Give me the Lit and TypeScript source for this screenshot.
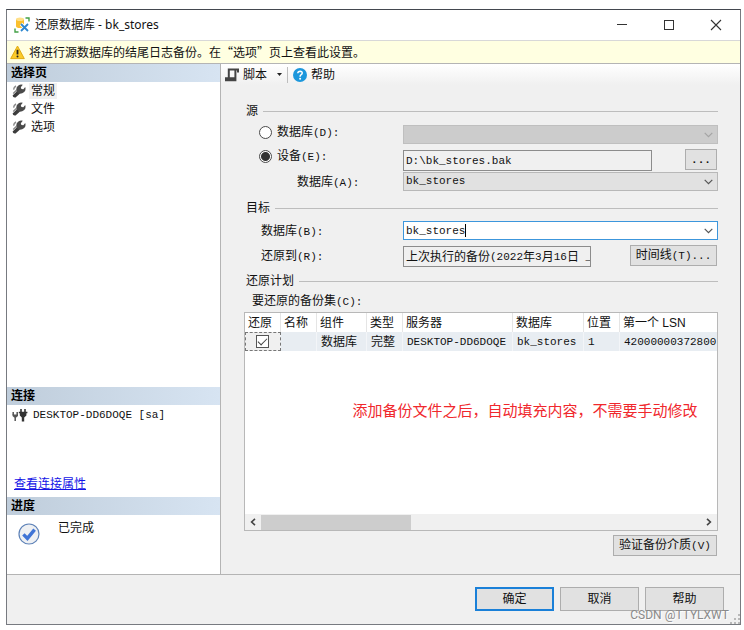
import { LitElement, html, css, svg } from "lit";
import { customElement, state } from "lit/decorators.js";

const wrench = html`<svg class="ico" width="14" height="14" viewBox="0 0 14 14" aria-hidden="true">
  <path d="M0.6 11.6 L5.2 7 L8 9.4 L3.6 13.4 Q1 14 0.6 11.6 Z" fill="#3c3c3c"/>
  <path d="M4.4 7.4 Q3.6 3.2 6.4 1.4 Q8.6 0 10.8 0.8 L8.8 3.2 L9.4 5 L11.4 5.2 L13.2 3 Q14.2 6 12.2 8 Q10 10 7 9.6 Z" fill="#4a4a4a"/>
  <path d="M1.6 5.6 Q1.8 3 4 2 M1.2 9.4 L4.2 6.6" fill="none" stroke="#8a8a8a" stroke-width="1.4"/>
</svg>`;

const chevron = (cls: string) => html`<svg class="chev ${cls}" width="9" height="6" viewBox="0 0 9 6" aria-hidden="true">
  <path d="M0.7 0.9 L4.5 4.7 L8.3 0.9" fill="none" stroke="currentColor" stroke-width="1.2"/>
</svg>`;

const grip = [[8, 0], [4, 4], [8, 4], [0, 8], [4, 8], [8, 8]];

@customElement("app-root")
export class AppRoot extends LitElement {
  @state() private source = "device";

  static styles = css`
    :host {
      display: flex;
      box-sizing: border-box;
      min-height: 100vh;
      padding: 9px 3px 5px 6px;
      background: #fff;
      color: #111;
      font: 12px/18px "Noto Sans", "Noto Sans CJK SC", sans-serif;
    }
    * { box-sizing: border-box; }
    svg { display: block; flex: none; }
    input, select, button { font: inherit; color: inherit; margin: 0; border-radius: 0; }
    .mono { font-family: "Liberation Mono", "Noto Sans CJK SC", monospace; font-size: 11px; }
    .window {
      position: relative;
      flex: 1;
      min-width: 0;
      display: flex;
      flex-direction: column;
      background: #f0f0f0;
      border: 1px solid #777a80;
      border-top-color: #43474f;
    }
    .titlebar {
      display: flex;
      align-items: center;
      height: 31px;
      padding: 0 18px 0 7px;
      gap: 5px;
      background: #fff;
      border-bottom: 1px solid #d8d8d8;
    }
    .titlebar h1 { flex: 1; margin: 0; font-size: 12px; font-weight: 400; }
    .caption { display: flex; gap: 35px; }
    .caption button { padding: 0; border: 0; background: none; width: 12px; height: 12px; color: #333; }
    .notice {
      display: flex;
      align-items: center;
      gap: 4px;
      height: 23px;
      padding-left: 3px;
      background: #ffffe1;
      border-bottom: 1px solid #b4b4b4;
      font-family: "Noto Sans CJK SC", sans-serif;
    }
    .body { flex: 1; display: flex; border-bottom: 1px solid #b4b4b4; }
    .side {
      flex: none;
      width: 214px;
      display: flex;
      flex-direction: column;
      background: #fff;
      border-right: 1px solid #b4b4b4;
    }
    .side h2 {
      margin: 0;
      padding-left: 4px;
      height: 18px;
      line-height: 17px;
      font-size: 12px;
      font-weight: 700;
      color: #000;
      background: linear-gradient(90deg, #bfcddb, #d7e4f2);
    }
    .pages { flex: 1; margin: 0; padding: 0; list-style: none; }
    .pages button {
      display: flex;
      align-items: center;
      gap: 3px;
      height: 18px;
      padding: 0 0 0 5px;
      border: 0;
      background: none;
    }
    .pages span { padding: 0 2px; line-height: 16px; }
    .pages .on span { background: #f0f0f0; }
    .conn { height: 92px; display: flex; flex-direction: column; justify-content: space-between; padding: 1px 7px 4px; }
    .server { display: flex; align-items: center; gap: 5px; padding-right: 6px; }
    .server svg { margin-left: -2px; }
    .conn a { color: #1414e6; line-height: 18px; }
    .progress { height: 59px; display: flex; gap: 18px; padding: 4px 11px; }
    .progress svg { margin-top: 4px; }
    .main { flex: 1; min-width: 0; }
    .toolbar {
      display: flex;
      align-items: center;
      height: 21px;
      padding-left: 4px;
      background: linear-gradient(#fff, #f0f0f0);
    }
    .toolbar button { display: flex; align-items: center; gap: 4px; padding: 0; border: 0; background: none; }
    .toolbar .drop { margin: 0 5px 0 10px; }
    .toolbar .sep { width: 1px; height: 16px; margin-right: 5px; background: #bdbdbd; }
    .form { padding: 17px 22px 18px 23px; }
    fieldset { border: 0; margin: 0; padding: 0; min-width: 0; }
    .group { display: flex; align-items: center; gap: 5px; height: 18px; padding-left: 2px; }
    .group::after { content: ""; flex: 1; height: 1px; background: #bdbdbd; }
    .rows { display: grid; grid-template-columns: 159px minmax(0, 1fr); row-gap: 5px; padding: 4px 0 5px; }
    .rows.source { padding: 5px 0 8px; }
    .pair { display: grid; grid-template-columns: subgrid; grid-column: 1 / -1; row-gap: 1px; }
    .field { display: flex; align-items: end; line-height: 16px; padding-left: 17px; }
    .field.deep { padding-left: 53px; }
    .field.mid { align-items: center; }
    .pick { display: flex; align-items: center; gap: 5px; height: 14px; padding-left: 15px; }
    .pick input {
      appearance: none;
      width: 13px;
      height: 13px;
      border: 1px solid #4a4a4a;
      border-radius: 50%;
      background: #fff;
    }
    .pick input:checked { background: radial-gradient(circle, #333 0 4px, #fff 5px); }
    .combo {
      position: relative;
      display: flex;
      align-items: center;
      height: 19px;
      border: 1px solid #b8b8b8;
      background: #e1e1e1;
    }
    .combo select {
      appearance: none;
      width: 100%;
      height: 100%;
      padding: 0 20px 0 2px;
      border: 0;
      background: none;
      outline: 0;
      line-height: 15px;
    }
    .combo.off { background: #ccc; border-color: #bfbfbf; }
    .combo.edit { background: #fff; border-color: #3c96dc; padding-left: 2px; }
    .combo input { width: 9ch; padding: 0; border: 0; outline: 0; background: none; height: 15px; }
    .caret { width: 1px; height: 13px; background: #000; }
    .chev { position: absolute; right: 4px; top: 6px; color: #555; pointer-events: none; }
    .chev.dim { color: #a5a5a5; }
    .line { display: flex; justify-content: space-between; height: 22px; }
    .box {
      align-self: end;
      display: flex;
      align-items: center;
      width: 249px;
      height: 21px;
      padding: 0 2px;
      border: 1px solid #8c8c8c;
      background: #f0f0f0;
      outline: 0;
    }
    .box.short { width: 188px; overflow: hidden; white-space: pre; line-height: 18px; }
    .btn {
      height: 21px;
      padding: 0;
      border: 1px solid #adadad;
      background: #e1e1e1;
      line-height: 18px;
      white-space: nowrap;
      margin-right: 1px;
    }
    .btn.dots { width: 32px; font-weight: 700; }
    .btn.time { width: 87px; }
    .btn.verify { display: block; width: 104px; margin: 4px 1px 0 auto; }
    .caption-text { padding: 2px 0 1px 8px; }
    .grid {
      display: flex;
      flex-direction: column;
      height: 219px;
      border: 1px solid #b8b8b8;
      background: #fff;
    }
    .scroller { flex: 1; overflow: hidden; }
    table { width: 100%; table-layout: fixed; border-collapse: separate; border-spacing: 0; }
    th, td { height: 19px; padding: 0 0 0 4px; text-align: left; font-weight: 400; white-space: nowrap; line-height: 18px; }
    th { padding-left: 3px; border-right: 1px solid #e5e5e5; font-family: "Liberation Sans", "Noto Sans CJK SC", sans-serif; }
    th:last-child { border-right: 0; }
    td { background: #e8edf2; border-right: 1px solid #f3f5f8; }
    td:last-child { border-right: 0; }
    td.tick { padding: 0; background: #f0f0f0; outline: 1px dashed #777; outline-offset: -1px; }
    .w36 { width: 36px; } .w50 { width: 50px; } .w110 { width: 110px; } .w71 { width: 71px; }
    .tick input {
      appearance: none;
      display: grid;
      place-items: center;
      width: 13px;
      height: 13px;
      margin: 0 auto;
      border: 1px solid #555;
      background: #fff;
    }
    .tick input:checked::before {
      content: "";
      width: 8px;
      height: 4px;
      border: solid #444;
      border-width: 0 0 1px 1px;
      transform: rotate(-45deg);
      margin-bottom: 3px;
    }
    .remark { margin: 0; text-align: center; color: #f0282d; font-size: 15px; line-height: 22px; padding: 48px 0 0 88px; white-space: nowrap; }
    .scrollbar { display: flex; align-items: center; justify-content: space-between; height: 16px; background: #f0f0f0; }
    .scrollbar button { display: grid; place-items: center; width: 16px; height: 16px; padding: 0; border: 0; background: none; color: #444; }
    .track { flex: 1; height: 15px; }
    .thumb { width: 34%; height: 100%; background: #cdcdcd; }
    .actions { display: flex; justify-content: flex-end; gap: 6px; height: 49px; padding: 12px 16px 0 0; }
    .actions button { width: 79px; height: 24px; padding: 0; border: 1px solid #adadad; background: #e1e1e1; line-height: 20px; }
    .actions .primary { border: 2px solid #1a80d8; line-height: 18px; }
    .sign {
      position: absolute;
      right: 11px;
      bottom: 0;
      font-family: Roboto, sans-serif;
      color: #8a8a8a;
      text-shadow: 1px 1px 0 #fff;
      pointer-events: none;
    }
    .grip { position: absolute; right: 0; bottom: 0; }
  `;

  render() {
    return html`<div class="window">
      <header class="titlebar">
        <svg width="16" height="16" viewBox="0 0 16 16" aria-hidden="true">
          <path d="M2 2 V9 Q2 11 6 11 Q10 11 10 9 V2 Z" fill="#fbc02d"/>
          <ellipse cx="6" cy="2.2" rx="4" ry="1.8" fill="#ffe08a"/>
          <path d="M11.5 1 H15 V4.5" fill="none" stroke="#43a047" stroke-width="1.4"/>
          <path d="M1 11.5 V15 H4.5" fill="none" stroke="#43a047" stroke-width="1.4"/>
          <path d="M7 7 L14 14 M14 7 L7 14" stroke="#fff" stroke-width="3.4"/>
          <path d="M7 7 L14 14 M14 7 L7 14" stroke="#2d87cf" stroke-width="1.8"/>
        </svg>
        <h1>还原数据库 - bk_stores</h1>
        <div class="caption">
          <button aria-label="最小化"><svg width="12" height="12" viewBox="0 0 12 12"><path d="M1 5.5 H11" stroke="#333"/></svg></button>
          <button aria-label="最大化"><svg width="12" height="12" viewBox="0 0 12 12"><rect x="1.5" y="1.5" width="9" height="9" fill="none" stroke="#333"/></svg></button>
          <button aria-label="关闭"><svg width="12" height="12" viewBox="0 0 12 12"><path d="M1 1 L11 11 M11 1 L1 11" stroke="#333" stroke-width="1.1"/></svg></button>
        </div>
      </header>
      <div class="notice" role="status">
        <svg width="15" height="15" viewBox="0 0 15 15" aria-hidden="true">
          <path d="M7.5 1 L14.3 13.6 H0.7 Z" fill="#fbcb2a" stroke="#e0ab14" stroke-linejoin="round"/>
          <path d="M7.5 4.8 V9.4" stroke="#222" stroke-width="1.8"/><circle cx="7.5" cy="11.4" r="1" fill="#222"/>
        </svg>
        <span>将进行源数据库的结尾日志备份。在“选项”页上查看此设置。</span>
      </div>
      <div class="body">
        <aside class="side">
          <h2>选择页</h2>
          <ul class="pages">
            ${["常规", "文件", "选项"].map((p, i) => html`<li><button class=${i === 0 ? "on" : ""}>${wrench}<span>${p}</span></button></li>`)}
          </ul>
          <h2>连接</h2>
          <div class="conn">
            <div class="server">
              <svg width="16" height="14" viewBox="0 0 16 14" aria-hidden="true">
                <path d="M1.2 4 V7 M5.2 4 V7 M3.2 8 V13" stroke="#555" stroke-width="1.5"/>
                <path d="M0.5 6.4 H6 V8 L4.2 9.6 H2.2 L0.5 8 Z" fill="#555"/>
                <path d="M9 1 V5 M13 1 V5" stroke="#333" stroke-width="1.6"/>
                <path d="M6.8 3.8 H15.4 V5.2 H14.4 V7.5 L12.2 9.6 V13.4 H9.8 V9.6 L7.8 7.5 V5.2 H6.8 Z" fill="#333"/>
              </svg>
              <span class="mono">DESKTOP-DD6DOQE [sa]</span>
            </div>
            <a href="#properties">查看连接属性</a>
          </div>
          <h2>进度</h2>
          <div class="progress">
            <svg width="22" height="22" viewBox="0 0 22 22" aria-hidden="true">
              <circle cx="11" cy="11" r="10" fill="#eef0f3" stroke="#5f83b8" stroke-width="1.2"/>
              <path d="M5.4 11.4 L9.4 15.4 L16.6 6.6" fill="none" stroke="#3f74d6" stroke-width="3.4"/>
            </svg>
            <span>已完成</span>
          </div>
        </aside>
        <main class="main">
          <div class="toolbar">
            <button>
              <svg width="14" height="14" viewBox="0 0 14 14" aria-hidden="true">
                <path d="M3.8 9.6 V1.6 H13 V4.4 M10.4 1.6 V12.2 H1 V10.2 H8.4 V12" fill="none" stroke="#444" stroke-width="2"/>
              </svg>脚本
            </button>
            <button class="drop" aria-label="更多"><svg width="5" height="3" viewBox="0 0 5 3"><path d="M0 0 H5 L2.5 3 Z" fill="#222"/></svg></button>
            <span class="sep"></span>
            <button>
              <svg width="14" height="14" viewBox="0 0 14 14" aria-hidden="true">
                <circle cx="7" cy="7" r="7" fill="#1c97dc"/>
                <path d="M4.8 5.2 Q5 3.2 7.1 3.2 Q9.3 3.3 9.2 5.1 Q9.1 6.2 7.9 6.9 Q7.1 7.4 7.1 8.7" fill="none" stroke="#fff" stroke-width="1.5"/>
                <circle cx="7.1" cy="10.7" r="1" fill="#fff"/>
              </svg>帮助
            </button>
          </div>
          <div class="form">
            <fieldset>
              <div class="group">源</div>
              <div class="rows source">
                <label class="pick"><input type="radio" name="src" .checked=${this.source === "db"} @change=${() => (this.source = "db")}><span>数据库<span class="mono">(D):</span></span></label>
                <div class="combo off"><select class="mono" aria-label="源数据库" disabled></select>${chevron("dim")}</div>
                <div class="pair">
                  <label class="pick"><input type="radio" name="src" .checked=${this.source === "device"} @change=${() => (this.source = "device")}><span>设备<span class="mono">(E):</span></span></label>
                  <div class="line">
                    <input class="box mono" aria-label="设备" readonly value="D:\\bk_stores.bak">
                    <button class="btn dots mono" aria-label="浏览">...</button>
                  </div>
                  <label class="field deep" for="dba"><span>数据库<span class="mono">(A):</span></span></label>
                  <div class="combo"><select class="mono" id="dba"><option>bk_stores</option></select>${chevron("")}</div>
                </div>
              </div>
            </fieldset>
            <fieldset>
              <div class="group">目标</div>
              <div class="rows">
                <label class="field" for="dbb"><span>数据库<span class="mono">(B):</span></span></label>
                <div class="combo edit"><input class="mono" id="dbb" value="bk_stores"><span class="caret"></span>${chevron("")}</div>
                <label class="field mid" for="until"><span>还原到<span class="mono">(R):</span></span></label>
                <div class="line">
                  <output class="box short" id="until">上次执行的备份<span class="mono">(2022</span>年<span class="mono">3</span>月<span class="mono">16</span>日<span class="mono"> _</span></output>
                  <button class="btn time">时间线<span class="mono">(T)...</span></button>
                </div>
              </div>
            </fieldset>
            <fieldset>
              <div class="group">还原计划</div>
              <div class="caption-text">要还原的备份集<span class="mono">(C):</span></div>
              <div class="grid">
                <div class="scroller">
                  <table>
                    <thead><tr>
                      <th class="w36">还原</th><th class="w36">名称</th><th class="w50">组件</th><th class="w36">类型</th>
                      <th class="w110">服务器</th><th class="w71">数据库</th><th class="w36">位置</th><th>第一个 LSN</th>
                    </tr></thead>
                    <tbody><tr>
                      <td class="tick"><input type="checkbox" aria-label="还原" checked></td><td></td><td>数据库</td><td>完整</td>
                      <td class="mono">DESKTOP-DD6DOQE</td><td class="mono">bk_stores</td><td class="mono">1</td><td class="mono">42000000372800</td>
                    </tr></tbody>
                  </table>
                  <p class="remark">添加备份文件之后，自动填充内容，不需要手动修改</p>
                </div>
                <div class="scrollbar">
                  <button aria-label="向左"><svg width="6" height="8" viewBox="0 0 6 8"><path d="M5 0.8 L1.6 4 L5 7.2" fill="none" stroke="currentColor" stroke-width="1.6"/></svg></button>
                  <div class="track"><div class="thumb"></div></div>
                  <button aria-label="向右"><svg width="6" height="8" viewBox="0 0 6 8"><path d="M1 0.8 L4.4 4 L1 7.2" fill="none" stroke="currentColor" stroke-width="1.6"/></svg></button>
                </div>
              </div>
              <button class="btn verify">验证备份介质<span class="mono">(V)</span></button>
            </fieldset>
          </div>
        </main>
      </div>
      <footer class="actions">
        <button class="primary">确定</button>
        <button>取消</button>
        <button>帮助</button>
      </footer>
      <span class="sign">CSDN @TTYLXWT</span>
      <svg class="grip" width="10" height="10" viewBox="0 0 10 10" aria-hidden="true">
        ${grip.map(([x, y]) => svg`<rect x=${x} y=${y} width="2" height="2" fill="#b9b9b9"/>`)}
      </svg>
    </div>`;
  }
}
